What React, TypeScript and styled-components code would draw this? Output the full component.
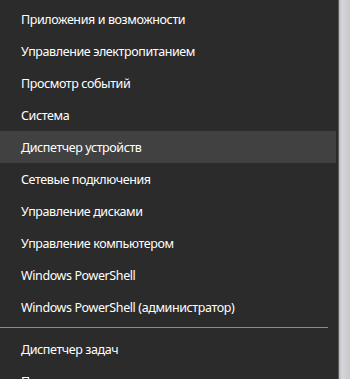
import styled, { createGlobalStyle } from "styled-components";

const GlobalStyle = createGlobalStyle`
  html, body {
    margin: 0;
    padding: 0;
    background: #2b2b2b;
  }
`;

const Screen = styled.div`
  width: 350px;
  height: 379px;
  display: flex;
  overflow: hidden;
  background: #2b2b2b;
`;

const Menu = styled.ul`
  list-style: none;
  margin: 0;
  padding: 3px 0 0 0;
  width: 338px;
  display: flex;
  flex-direction: column;
  background: #2b2b2b;
  font-family: "Noto Sans", "Open Sans", sans-serif;
  font-size: 12.5px;
  letter-spacing: -0.4px;
  color: #ffffff;
`;

const Item = styled.li<{ $active?: boolean }>`
  height: 32px;
  flex-shrink: 0;
  display: flex;
  align-items: center;
  padding-left: 21px;
  margin-right: 2px;
  background: ${(p) => (p.$active ? "#414141" : "transparent")};
  white-space: nowrap;
`;

const Separator = styled.li`
  flex-shrink: 0;
  height: 1px;
  margin: 4px 10px 5px 0;
  background: #8a8a8a;
`;

const Edge = styled.div`
  width: 11px;
  flex-shrink: 0;
  border-left: 1px solid #5a5a5a;
  background: linear-gradient(to right, #b9b9bd 0, #d6d6da 3px, #c9c9cd 100%);
`;

const top = [
  "Приложения и возможности",
  "Управление электропитанием",
  "Просмотр событий",
  "Система",
  "Диспетчер устройств",
  "Сетевые подключения",
  "Управление дисками",
  "Управление компьютером",
  "Windows PowerShell",
  "Windows PowerShell (администратор)",
];

const bottom = ["Диспетчер задач", "Параметры"];

export default function App() {
  return (
    <>
      <GlobalStyle />
      <Screen>
        <Menu>
          {top.map((t) => (
            <Item key={t} $active={t === "Диспетчер устройств"}>
              {t}
            </Item>
          ))}
          <Separator />
          {bottom.map((t) => (
            <Item key={t}>{t}</Item>
          ))}
        </Menu>
        <Edge />
      </Screen>
    </>
  );
}
